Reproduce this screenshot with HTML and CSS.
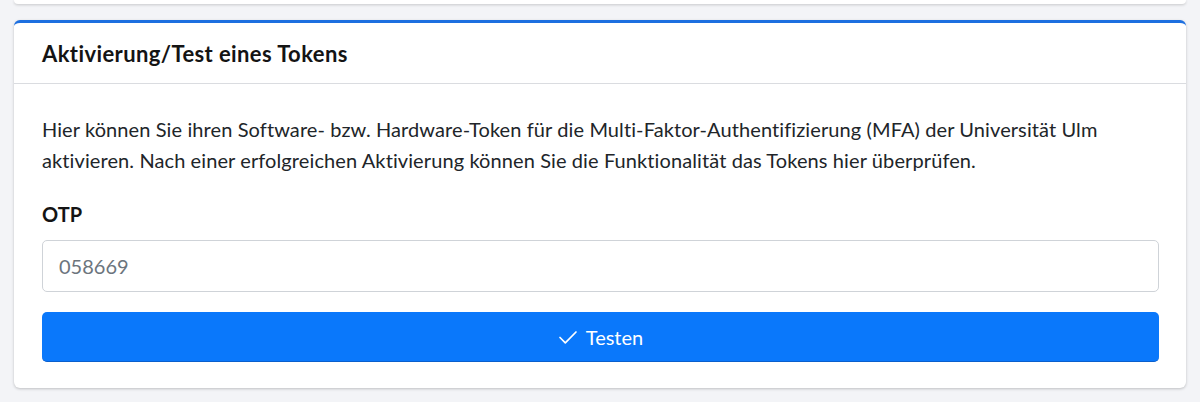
FILE: index.html
```html
<!DOCTYPE html>
<html lang="de">
<head>
<meta charset="utf-8">
<title>Aktivierung/Test eines Tokens</title>
<link rel="stylesheet" href="styles.css">
</head>
<body>
<div class="prev-card"></div>
<section class="card">
  <header class="card-header">Aktivierung/Test eines Tokens</header>
  <div class="card-body">
    <p class="intro">Hier können Sie ihren Software- bzw. Hardware-Token für die Multi-Faktor-Authentifizierung (MFA) der Universität Ulm aktivieren. Nach einer erfolgreichen Aktivierung können Sie die Funktionalität das Tokens hier überprüfen.</p>
    <label class="label" for="otp">OTP</label>
    <input class="input" id="otp" type="text" placeholder="058669">
    <button class="btn" type="button">
      <svg class="check" width="20" height="20" viewBox="0 0 20 20" aria-hidden="true"><path d="M2 10.5 L7.3 15.8 L18 5" fill="none" stroke="#fff" stroke-width="1.7" stroke-linecap="round" stroke-linejoin="round"/></svg>
      <span>Testen</span>
    </button>
  </div>
</section>
</body>
</html>
```

FILE: styles.css
```css
* { box-sizing: border-box; }
html, body { margin: 0; padding: 0; }
body {
  background: #f3f4f7;
  font-family: Lato, "Liberation Sans", sans-serif;
  color: #212529;
  height: 402px;
  overflow: hidden;
}
.prev-card {
  height: 4px;
  margin: 0 14px;
  background: #ffffff;
  border-radius: 0 0 5px 5px;
  box-shadow: 0 1px 3px rgba(0,0,0,0.18);
}
.card {
  margin: 16px 14px 0;
  background: #ffffff;
  border-top: 3px solid #1d6fe0;
  border-radius: 6px;
  box-shadow: 0 1px 3px rgba(0,0,0,0.22);
}
.card-header {
  height: 61px;
  display: flex;
  align-items: center;
  padding: 0 28px;
  border-bottom: 1px solid #dadce0;
  font-weight: 700;
  font-size: 22px;
  letter-spacing: 0.4px;
  color: #141414;
}
.card-body {
  padding: 30px 27px 26px 28px;
  display: flex;
  flex-direction: column;
}
.intro {
  margin: 0;
  font-size: 20px;
  line-height: 31px;
  letter-spacing: 0.1px;
}
.label {
  margin-top: 24px;
  font-weight: 700;
  font-size: 20px;
  line-height: 28px;
  color: #141414;
}
.input {
  margin-top: 12px;
  height: 52px;
  border: 1px solid #cfd3d8;
  border-radius: 5px;
  padding: 0 16px;
  font: inherit;
  font-size: 20px;
  color: #495057;
  outline: none;
}
.input::placeholder { color: #6c757d; }
.btn {
  margin-top: 20px;
  height: 50px;
  border: none;
  border-bottom: 1px solid #0a5fcc;
  border-radius: 5px;
  background: #0a78fb;
  color: #ffffff;
  font: inherit;
  font-size: 20px;
  display: flex;
  align-items: center;
  justify-content: center;
  gap: 8px;
}
.check { display: block; }
```
